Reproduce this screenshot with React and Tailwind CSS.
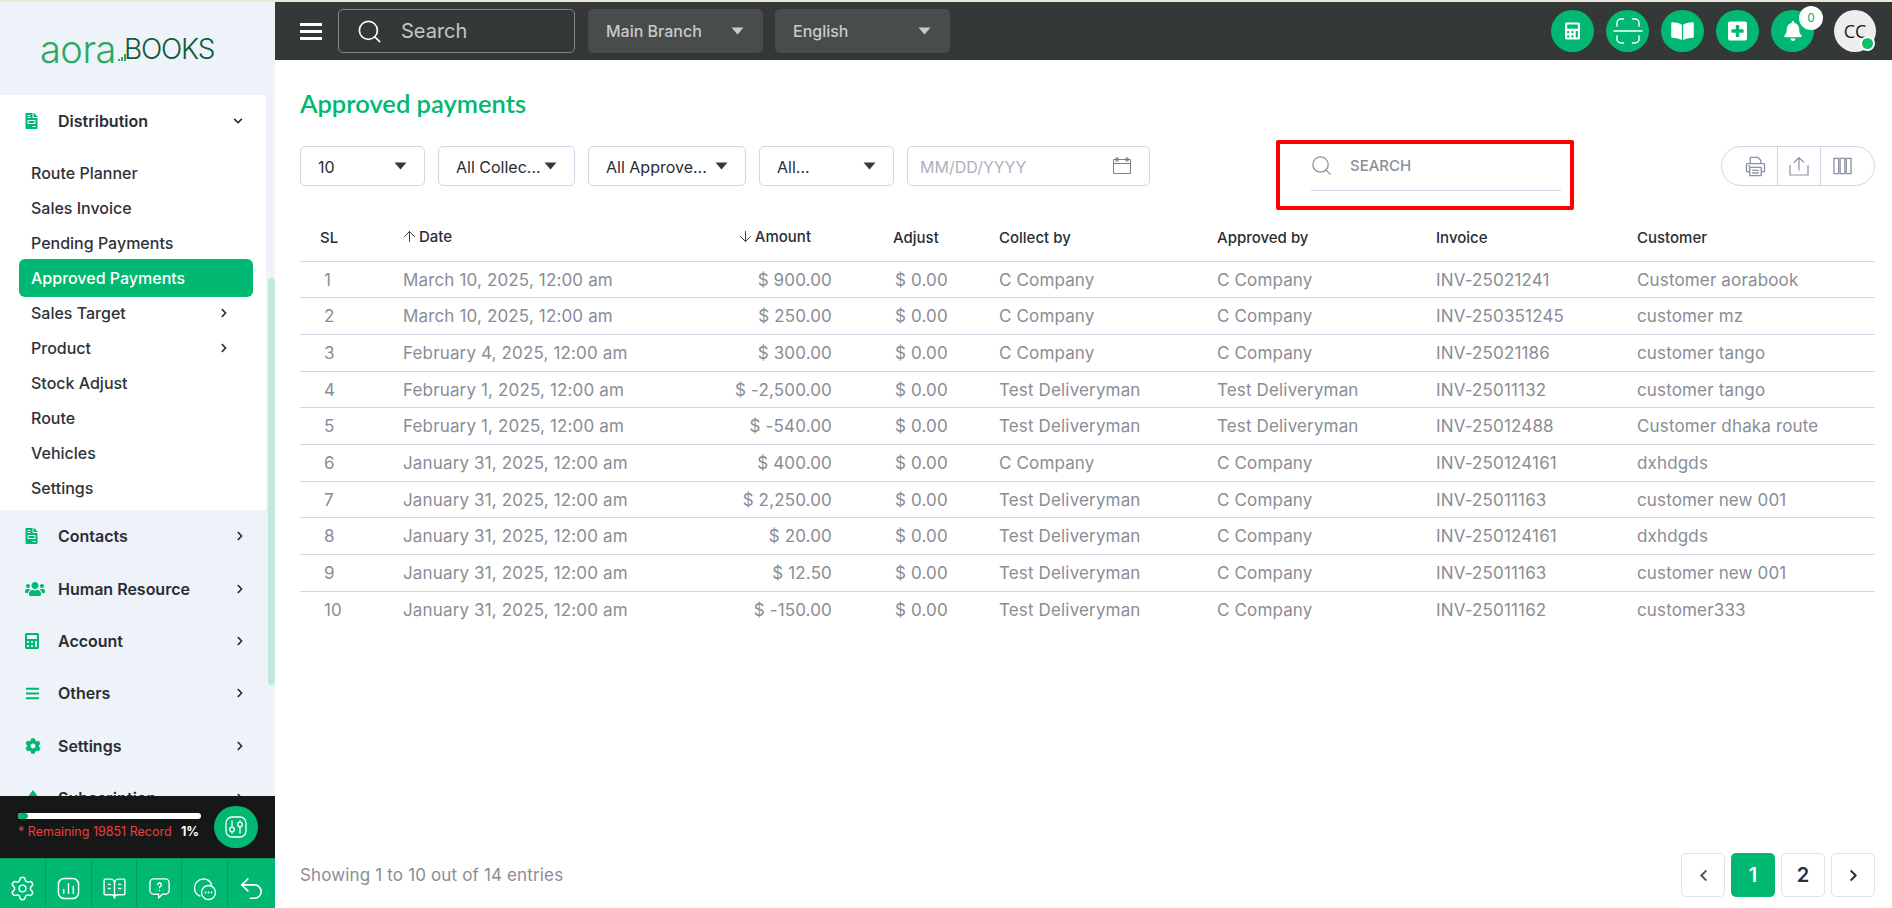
import React from "react";
import { Search, Settings, BookOpenText, Undo2, ArrowUp, ArrowDown } from "lucide-react";
import { FaCalculator, FaBookOpen, FaPlusSquare, FaBell, FaUsers, FaBars, FaCog, FaFileInvoice, FaChevronRight, FaChevronDown, FaChevronLeft } from "react-icons/fa";

const Tri = ({ className }) => (
  <svg viewBox="0 0 12 8" className={className} fill="currentColor"><path d="M0 0.5h12L6 7.5z" /></svg>
);

const rows = [
  ["1", "March 10, 2025, 12:00 am", "$ 900.00", "C Company", "C Company", "INV-25021241", "Customer aorabook"],
  ["2", "March 10, 2025, 12:00 am", "$ 250.00", "C Company", "C Company", "INV-250351245", "customer mz"],
  ["3", "February 4, 2025, 12:00 am", "$ 300.00", "C Company", "C Company", "INV-25021186", "customer tango"],
  ["4", "February 1, 2025, 12:00 am", "$ -2,500.00", "Test Deliveryman", "Test Deliveryman", "INV-25011132", "customer tango"],
  ["5", "February 1, 2025, 12:00 am", "$ -540.00", "Test Deliveryman", "Test Deliveryman", "INV-25012488", "Customer dhaka route"],
  ["6", "January 31, 2025, 12:00 am", "$ 400.00", "C Company", "C Company", "INV-250124161", "dxhdgds"],
  ["7", "January 31, 2025, 12:00 am", "$ 2,250.00", "Test Deliveryman", "C Company", "INV-25011163", "customer new 001"],
  ["8", "January 31, 2025, 12:00 am", "$ 20.00", "Test Deliveryman", "C Company", "INV-250124161", "dxhdgds"],
  ["9", "January 31, 2025, 12:00 am", "$ 12.50", "Test Deliveryman", "C Company", "INV-25011163", "customer new 001"],
  ["10", "January 31, 2025, 12:00 am", "$ -150.00", "Test Deliveryman", "C Company", "INV-25011162", "customer333"],
];

const subs = [
  ["Route Planner"], ["Sales Invoice"], ["Pending Payments"], ["Approved Payments", false, true],
  ["Sales Target", true], ["Product", true], ["Stock Adjust"], ["Route"], ["Vehicles"], ["Settings"],
];

const mains = [
  ["Contacts", <FaFileInvoice className="w-[13px] h-[16px]" />],
  ["Human Resource", <FaUsers className="w-[20px] h-[16px]" />],
  ["Account", <FaCalculator className="w-[14px] h-[16px]" />],
  ["Others", <FaBars className="w-[15px] h-[15px]" />],
  ["Settings", <FaCog className="w-[16px] h-[16px]" />],
  ["Subscription", <svg viewBox="0 0 16 16" className="w-[16px] h-[16px]" fill="currentColor"><path d="M8 0l6 8-6 8-6-8z" /></svg>],
];

const cell = "flex items-center justify-center pt-[10px] border-r border-[#0a9a63]";

const Sidebar = () => (
  <aside className="w-[275px] shrink-0 h-full bg-[#edf3f8] flex flex-col relative">
    <div className="h-[93px] shrink-0 flex items-center pl-[40px] select-none leading-none overflow-hidden">
      <span className="inline-block w-[78px] text-[38px] font-light text-[#2aa866] tracking-[-0.5px] [font-family:Inter,sans-serif]">aora</span>
      <svg viewBox="0 0 10 10" className="w-[10px] h-[10px] mt-[14px] text-[#2aa866] shrink-0" fill="currentColor"><path d="M0 8h2v2H0zM3 6h2v4H3zM6 3h2v7H6z" /></svg>
      <span className="text-[28px] -ml-[4px] font-light text-[#0d5a38] tracking-[-1.2px] [font-family:Inter,sans-serif]">BOOKS</span>
    </div>
    <div className="flex-1 min-h-0 overflow-hidden [font-family:Inter,sans-serif]">
      <div className="w-[266px] h-[415px] bg-white">
        <div className="h-[52px] flex items-center pl-[25px] pr-[23px]">
          <FaFileInvoice className="w-[13px] h-[16px] text-[#00b871]" />
          <span className="ml-[20px] flex-1 text-[16px] font-semibold text-[#2a2d34]">Distribution</span>
          <FaChevronDown className="w-[10px] h-[10px] text-[#2a2d34]" />
        </div>
        <ul className="mt-[8px] ml-[19px] w-[234px]">
          {subs.map(([t, c, a]) => (
            <li key={t} className={"flex items-center pl-[12px] pr-[29px] text-[16px] font-medium " + (a ? "h-[38px] -my-[1.5px] relative rounded-[6px] bg-[#00b871] text-white" : "h-[35px] text-[#2f323a]")}>
              <span className="flex-1">{t}</span>
              {c && <FaChevronRight className="w-[10px] h-[10px] text-[#2a2d34] -mr-[5px]" />}
            </li>
          ))}
        </ul>
      </div>
      {mains.map(([t, ic]) => (
        <div key={t} className="h-[52.4px] flex items-center pl-[25px] pr-[30px] relative">
          <span className="w-[33px] text-[#00b871] flex items-center">{ic}</span>
          <span className="flex-1 text-[16px] font-semibold text-[#2a2d34]">{t}</span>
          <FaChevronRight className="w-[10px] h-[10px] text-[#2a2d34]" />
        </div>
      ))}
    </div>
    <div className="absolute right-0 top-[276px] w-[7px] h-[407px] rounded-[4px] bg-[#c0e8db]" />
    <div className="h-[62px] shrink-0 bg-[#161717] pl-[18px] pr-[17px] flex items-center justify-between [font-family:Inter,sans-serif] relative z-10">
      <div className="w-[183px]">
        <div className="h-[6px] rounded-full bg-white overflow-hidden mb-[4px]">
          <div className="h-full w-[10px] rounded-full bg-[#00b871]" />
        </div>
        <div className="flex justify-between items-center text-[12.5px] leading-[18px] whitespace-nowrap">
          <span className="text-[#f03e3e]">* Remaining 19851 Record</span>
          <span className="text-white font-bold pr-[2px]">1%</span>
        </div>
      </div>
      <div className="w-[44px] h-[42px] rounded-full bg-[#00b871] flex items-center justify-center text-white">
        <svg viewBox="0 0 22 22" className="w-[22px] h-[22px]" fill="none" stroke="currentColor" strokeWidth="1.3" strokeLinecap="round">
          <rect x="1" y="1" width="20" height="20" rx="6" />
          <path d="M7 5v6M7 16v1M15 5v1M15 11v6" />
          <circle cx="7" cy="13.500" r="2.300" />
          <circle cx="15" cy="8.500" r="2.300" />
        </svg>
      </div>
    </div>
    <div className="h-[50px] shrink-0 bg-[#00b871] border-t border-[#0a9a63] flex text-white relative z-10">
      <div className={"w-[46px] " + cell}><Settings className="w-[27px] h-[27px]" strokeWidth={1.3} /></div>
      <div className={"w-[46px] " + cell}>
        <svg viewBox="0 0 24 24" className="w-[23px] h-[23px]" fill="none" stroke="currentColor" strokeWidth="1.5" strokeLinecap="round"><rect x="1.500" y="1.500" width="21" height="21" rx="6" /><path d="M7 17v-4M12 17V7M17 17v-7" /></svg>
      </div>
      <div className={"w-[45px] " + cell}><BookOpenText className="w-[25px] h-[25px]" strokeWidth={1.3} /></div>
      <div className={"w-[45px] " + cell}>
        <svg viewBox="0 0 24 24" className="w-[23px] h-[23px]" fill="none" stroke="currentColor" strokeWidth="1.4" strokeLinejoin="round"><path d="M6 2h12a4 4 0 0 1 4 4v8a4 4 0 0 1-4 4h-3l-4 4v-4H6a4 4 0 0 1-4-4V6a4 4 0 0 1 4-4z" /><path d="M10 8a2 2 0 1 1 3 1.800c-.7.4-1 .8-1 1.400M12 14v.2" strokeLinecap="round" /></svg>
      </div>
      <div className={"w-[46px] " + cell}>
        <svg viewBox="0 0 24 24" className="w-[24px] h-[24px]" fill="none" stroke="currentColor" strokeWidth="1.400" strokeLinecap="round"><path d="M7 19C3 17.500 1.500 14 1.500 11 1.500 6 5.500 2 10.500 2c4 0 7 2.500 8.200 6" /><circle cx="15.500" cy="15.500" r="7" /><path d="M12.500 15.500h.01M15.500 15.500h.01M18.500 15.500h.01" strokeWidth="1.800" /></svg>
      </div>
      <div className="flex-1 flex items-center justify-center pt-[10px]"><Undo2 className="w-[29px] h-[29px]" strokeWidth={1.3} /></div>
    </div>
  </aside>
);

const Circle = ({ children }) => (
  <div className="w-[43px] h-[42px] rounded-full bg-[#00b871] flex items-center justify-center text-white relative">{children}</div>
);

const Topbar = () => (
  <header className="h-[58px] shrink-0 bg-[#343836] pl-[25px] pr-[16px] flex items-center justify-between">
    <div className="flex items-center">
      <div className="w-[22px] flex flex-col gap-[4px]">
        <div className="h-[3px] bg-white" /><div className="h-[3px] bg-white" /><div className="h-[3px] bg-white" />
      </div>
      <div className="ml-[16px] w-[237px] h-[44px] rounded-[5px] border border-[#7d8a85] flex items-center pl-[17px] text-[#c4c7c5]">
        <Search className="w-[27px] h-[27px] text-white" strokeWidth={1.5} />
        <span className="ml-[18px] text-[20px] [font-family:Inter,sans-serif]">Search</span>
      </div>
      <div className="ml-[13px] w-[175px] h-[44px] rounded-[5px] bg-[#484c4a] flex items-center justify-between pl-[18px] pr-[19px] text-[#c8cbc9] text-[16px] font-medium [font-family:Inter,sans-serif]">
        <span>Main Branch</span><Tri className="w-[13px] h-[8px] text-[#c8cbc9]" />
      </div>
      <div className="ml-[12px] w-[175px] h-[44px] rounded-[5px] bg-[#484c4a] flex items-center justify-between pl-[18px] pr-[19px] text-[#c8cbc9] text-[16px] font-medium [font-family:Inter,sans-serif]">
        <span>English</span><Tri className="w-[13px] h-[8px] text-[#c8cbc9]" />
      </div>
    </div>
    <div className="flex items-center gap-[12px]">
      <Circle><FaCalculator className="w-[15px] h-[20px]" /></Circle>
      <Circle>
        <svg viewBox="0 0 30 30" className="w-[30px] h-[30px]" fill="none" stroke="currentColor" strokeWidth="1.500" strokeLinecap="round"><path d="M4 10V7a4 4 0 0 1 4-4h2.500M19.500 3H22a4 4 0 0 1 4 4v3M1 15h28" /><path d="M4 20v3a4 4 0 0 0 4 4h2.500M19.500 27H22a4 4 0 0 0 4-4v-3" /></svg>
      </Circle>
      <Circle><FaBookOpen className="w-[23px] h-[20px]" /></Circle>
      <Circle><FaPlusSquare className="w-[19px] h-[22px]" /></Circle>
      <Circle>
        <FaBell className="w-[18px] h-[20px]" />
        <div className="absolute -top-[4px] -right-[9px] w-[24px] h-[24px] rounded-full bg-white text-[#00b871] text-[12px] flex items-center justify-center [font-family:Inter,sans-serif]">0</div>
      </Circle>
      <div className="ml-[8px] w-[42px] h-[42px] rounded-full bg-[#eeeeee] flex items-center justify-center text-[18px] text-[#1b1b1b] relative [font-family:'Open_Sans',sans-serif]">
        CC
        <div className="absolute right-[1px] bottom-[1px] w-[15px] h-[15px] rounded-full bg-[#0cc269] border-[2px] border-white" />
      </div>
    </div>
  </header>
);

const Select = ({ w, label }) => (
  <div className={"h-[40px] rounded-[5px] border border-[#d5d5e5] bg-white flex items-center justify-between text-[16px] text-[#2a2d34] pl-[17px] pr-[17px] " + w}>
    <span className="pt-[1px]">{label}</span><Tri className="w-[13px] h-[8px] text-[#2f3b3d]" />
  </div>
);

const Toolbar = () => (
  <div className="mt-[27px] flex items-start h-[40px]">
    <div className="flex gap-[13px]">
      <Select w="w-[125px]" label="10" />
      <Select w="w-[137px]" label="All Collec..." />
      <Select w="w-[158px]" label="All Approve..." />
      <Select w="w-[135px]" label="All..." />
      <div className="w-[243px] h-[40px] rounded-[5px] border border-[#d5d5e5] flex items-center justify-between pl-[12px] pr-[17px] text-[16px] text-[#adb0bb]">
        <span className="pt-[1px]">MM/DD/YYYY</span>
        <svg viewBox="0 0 20 20" className="w-[20px] h-[20px] text-[#7b7f8a]" fill="none" stroke="currentColor" strokeWidth="1"><path d="M1.500 3.500h17v14h-17zM1.500 7.500h17" /><rect x="4" y="2" width="2" height="3" /><rect x="14" y="2" width="2" height="3" /></svg>
      </div>
    </div>
    <div className="ml-[126px] -mt-[6px] w-[298px] h-[70px] border-[4px] border-[#ff0000] rounded-[2px] relative shrink-0 text-[#8b8f99]">
      <div className="absolute left-[31px] right-[9px] top-[46px] h-px bg-[#d5d5e5]" />
      <Search className="absolute left-[30px] top-[10px] w-[23px] h-[23px]" strokeWidth={1.3} />
      <span className="absolute left-[70px] top-[12px] text-[15px] font-medium leading-[20px]">SEARCH</span>
    </div>
    <div className="ml-auto w-[154px] h-[40px] rounded-full border border-[#d5d5e5] flex items-center text-[#8b93a3]">
      <div className="w-[56px] h-full flex items-center justify-end pr-[11px] border-r border-[#d5d5e5]">
        <svg viewBox="0 0 22 22" className="w-[21px] h-[21px]" fill="none" stroke="currentColor" strokeWidth="1.4" strokeLinejoin="round">
          <path d="M5.500 8V1.500h8l3 3V8" />
          <path d="M5 16.500H2.500a1 1 0 0 1-1-1V9a1 1 0 0 1 1-1h17a1 1 0 0 1 1 1v6.500a1 1 0 0 1-1 1H17" />
          <rect x="5" y="12" width="12" height="8.500" fill="white" />
          <path d="M7.500 15h7M7.500 17.800h7M3.500 10.500h2" />
        </svg>
      </div>
      <div className="w-[43px] h-full flex items-center justify-center border-r border-[#d5d5e5]">
        <svg viewBox="0 0 20 20" className="w-[20px] h-[20px]" fill="none" stroke="currentColor" strokeWidth="1.2"><path d="M1 9v10h18V9M10 14.500V1.500M5 6.500l5-5 5 5" /></svg>
      </div>
      <div className="flex-1 flex items-center justify-start pl-[12px]">
        <svg viewBox="0 0 20 18" className="w-[19px] h-[18px]" fill="none" stroke="currentColor" strokeWidth="1.4"><rect x="1" y="1" width="5" height="16" /><rect x="7.500" y="1" width="5" height="16" /><rect x="14" y="1" width="5" height="16" /></svg>
      </div>
    </div>
  </div>
);

const Table = () => (
  <table className="mt-[30px] w-[1575px] table-fixed border-collapse text-[17px] tracking-[0.15px] text-[#8a8d96] [font-family:Inter,sans-serif]">
    <colgroup>
      <col className="w-[83px]" /><col className="w-[268px]" /><col className="w-[200px]" /><col className="w-[128px]" />
      <col className="w-[218px]" /><col className="w-[219px]" /><col className="w-[201px]" /><col className="w-[258px]" />
    </colgroup>
    <thead>
      <tr className="h-[45px] text-[15px] tracking-normal font-medium text-[#2a2d34] border-b border-[#d5d5e5]">
        <th className="pl-[20px] text-left font-medium">SL</th>
        <th className="pl-[20px] pt-[1px] text-left font-medium"><span className="inline-flex items-center gap-[1px]"><ArrowUp className="w-[17px] h-[17px] -ml-[2px]" strokeWidth={1.3} />Date</span></th>
        <th className="pr-[40px] pt-[1px] text-right font-medium"><span className="inline-flex items-center gap-[1px]"><ArrowDown className="w-[17px] h-[17px]" strokeWidth={1.3} />Amount</span></th>
        <th className="pl-[42px] text-left font-medium">Adjust</th>
        <th className="pl-[20px] text-left font-medium">Collect by</th>
        <th className="pl-[20px] text-left font-medium">Approved by</th>
        <th className="pl-[20px] text-left font-medium">Invoice</th>
        <th className="pl-[20px] text-left font-medium">Customer</th>
      </tr>
    </thead>
    <tbody>
      {rows.map((r) => (
        <tr key={r[0]} className="h-[36.7px] border-b border-[#d5d5e5] last:border-b-0">
          <td className="pl-[24px] pt-[2px]">{r[0]}</td>
          <td className="pl-[20px] pt-[2px]">{r[1]}</td>
          <td className="pr-[19px] pt-[2px] text-right">{r[2]}</td>
          <td className="pl-[44px] pt-[2px]">$ 0.00</td>
          <td className="pl-[20px] pt-[2px]">{r[3]}</td>
          <td className="pl-[20px] pt-[2px]">{r[4]}</td>
          <td className="pl-[20px] pt-[2px]">{r[5]}</td>
          <td className="pl-[20px] pt-[2px]">{r[6]}</td>
        </tr>
      ))}
    </tbody>
  </table>
);

const PageBtn = ({ children, active }) => (
  <div className={"w-[44px] h-[44px] rounded-[5px] flex items-center justify-center text-[20px] font-semibold " + (active ? "bg-[#00b871] text-white" : "border border-[#e2e3e6] text-[#2a2d34]")}>{children}</div>
);

export default function App() {
  return (
    <div className="h-[908px] w-[1892px] overflow-hidden bg-white flex flex-col [font-family:Inter,sans-serif]">
      <div className="h-[2px] shrink-0 bg-[#ebe6d8]" />
      <div className="flex-1 min-h-0 flex">
        <Sidebar />
        <div className="flex-1 min-w-0 flex flex-col">
          <Topbar />
          <main className="flex-1 min-h-0 pl-[25px] pr-[17px] flex flex-col">
            <h1 className="mt-[27px] text-[25.5px] leading-[32px] font-semibold text-[#00b871] [font-family:Lato,sans-serif]">Approved payments</h1>
            <Toolbar />
            <Table />
            <div className="mt-auto mb-[11px] flex items-center justify-between">
              <span className="pt-[2px] text-[17px] tracking-[0.15px] text-[#8a8d96]">Showing 1 to 10 out of 14 entries</span>
              <div className="flex gap-[6px]">
                <PageBtn><FaChevronLeft className="w-[13px] h-[13px] text-[#555]" /></PageBtn>
                <PageBtn active>1</PageBtn>
                <PageBtn>2</PageBtn>
                <PageBtn><FaChevronRight className="w-[13px] h-[13px]" /></PageBtn>
              </div>
            </div>
          </main>
        </div>
      </div>
    </div>
  );
}
